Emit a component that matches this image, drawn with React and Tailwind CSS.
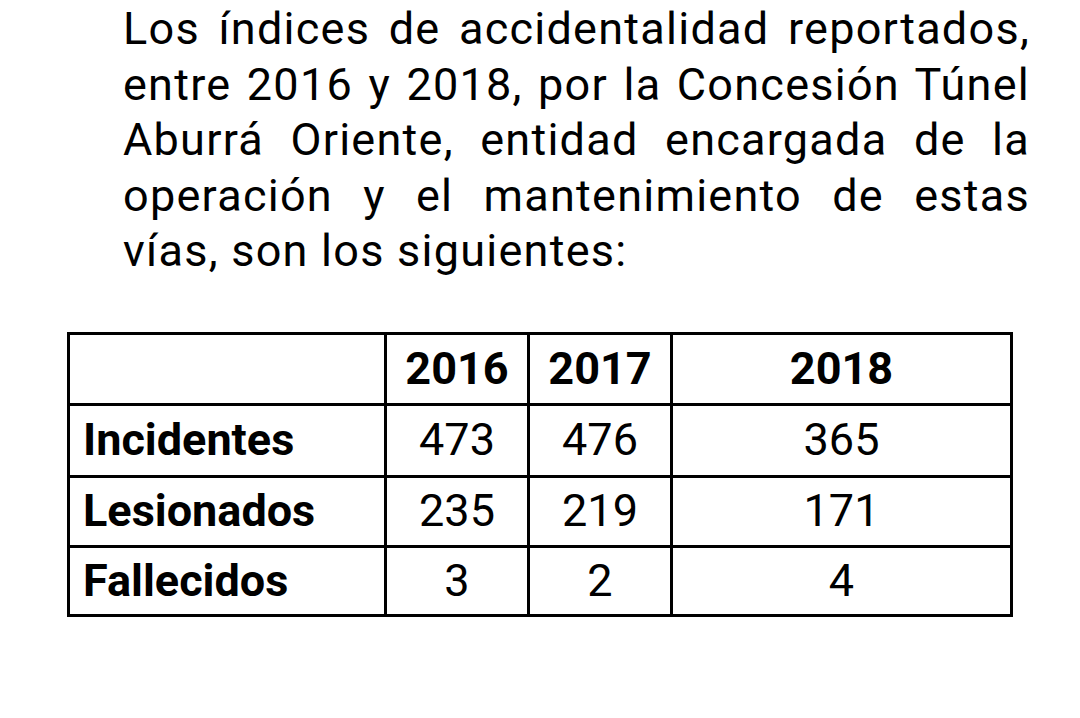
export default function App() {
  const rows = [
    ["Incidentes", "473", "476", "365"],
    ["Lesionados", "235", "219", "171"],
    ["Fallecidos", "3", "2", "4"],
  ];
  return (
    <div className="w-[1080px] h-[718px] bg-white text-black overflow-hidden" style={{ fontFamily: "Roboto, 'Noto Sans', sans-serif" }}>
      <p className="ml-[123px] w-[907px] pt-[1px] text-[45px] leading-[55.5px] tracking-[1.25px] text-justify">
        Los índices de accidentalidad reportados, entre 2016 y 2018, por la Concesión Túnel Aburrá Oriente, entidad encargada de la operación y el mantenimiento de estas vías, son los siguientes:
      </p>
      <div className="mt-[53px] ml-[67px] w-[946px] grid grid-cols-[314px_140px_140px_337px] grid-rows-[68px_69px_67px_66px] gap-[3px] p-[3px] bg-black text-[45px]">
        <div className="bg-white" />
        <div className="bg-white flex items-center justify-center font-bold">2016</div>
        <div className="bg-white flex items-center justify-center font-bold">2017</div>
        <div className="bg-white flex items-center justify-center font-bold">2018</div>
        {rows.map((r) => (
          <>
            <div key={r[0]} className="bg-white flex items-center pl-[13px] font-bold">{r[0]}</div>
            <div className="bg-white flex items-center justify-center">{r[1]}</div>
            <div className="bg-white flex items-center justify-center">{r[2]}</div>
            <div className="bg-white flex items-center justify-center">{r[3]}</div>
          </>
        ))}
      </div>
    </div>
  );
}
